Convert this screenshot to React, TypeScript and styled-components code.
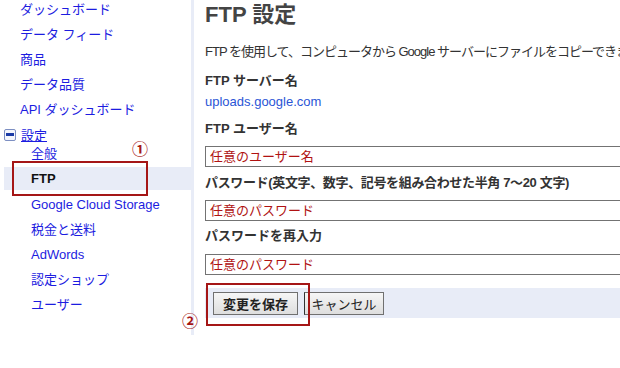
import styled, { createGlobalStyle } from 'styled-components';

const GlobalStyle = createGlobalStyle`
  html, body {
    margin: 0;
    padding: 0;
    background: #fff;
    overflow: hidden;
  }
  body {
    font-family: 'Liberation Sans', 'Noto Sans CJK JP', sans-serif;
    font-size: 13px;
  }
`;

const PAGE_BG = '#e8ecf7';
const MARK_RED = '#a51616';

const Page = styled.div`
  display: flex;
  width: 620px;
  height: 368px;
  overflow: hidden;
  position: relative;
`;

const Sidebar = styled.nav`
  flex: 0 0 191px;
  height: 335px;
  border-right: 3px solid ${PAGE_BG};
`;

const NavList = styled.ul`
  list-style: none;
  margin: -3px 0 0;
  padding: 0;
`;

const NavItem = styled.li<{ $sub?: boolean }>`
  height: 25px;
  line-height: 25px;
  padding-left: ${(p) => (p.$sub ? 31 : 20)}px;
  color: #1c1ce0;
  white-space: nowrap;
`;

const SectionItem = styled.li`
  display: flex;
  align-items: center;
  height: 25px;
  padding-left: 4px;
  gap: 5px;
  color: #1c1ce0;
  text-decoration: underline;
`;

const MinusBox = styled.span`
  display: inline-flex;
  align-items: center;
  justify-content: center;
  box-sizing: border-box;
  width: 12px;
  height: 12px;
  border: 1px solid #7d8fc2;
  border-radius: 2px;
  background: #f4f6fc;
  &::after {
    content: '';
    width: 8px;
    height: 3px;
    background: #1b3ba6;
  }
`;

const FirstSubItem = styled(NavItem)`
  height: 14px;
  line-height: 14px;
`;

const ActiveItem = styled.li`
  margin: 6px 0 2px 4px;
  padding-left: 27px;
  height: 23px;
  line-height: 23px;
  background: ${PAGE_BG};
  font-weight: bold;
  color: #111;
`;

const Marker = styled.span`
  position: absolute;
  color: ${MARK_RED};
  font-size: 16px;
  line-height: 16px;
  font-weight: bold;
  font-family: 'Noto Sans CJK JP', sans-serif;
`;

const HighlightFrame = styled.div<{ $x: number; $y: number; $w: number; $h: number }>`
  position: absolute;
  left: ${(p) => p.$x}px;
  top: ${(p) => p.$y}px;
  width: ${(p) => p.$w}px;
  height: ${(p) => p.$h}px;
  border: 2px solid ${MARK_RED};
  box-sizing: border-box;
  pointer-events: none;
`;

const Main = styled.main`
  flex: 1;
  padding-left: 11px;
  overflow: hidden;
`;

const Title = styled.h1`
  margin: 0;
  font-size: 22px;
  line-height: 30px;
  font-weight: bold;
  color: #444;
`;

const Description = styled.p`
  margin: 13px 0 0;
  line-height: 18px;
  color: #333;
  white-space: nowrap;
  letter-spacing: -1px;
`;

const Label = styled.div<{ $mt: number; $tight?: boolean }>`
  margin-top: ${(p) => p.$mt}px;
  line-height: 18px;
  font-weight: bold;
  color: #333;
  white-space: nowrap;
  letter-spacing: ${(p) => (p.$tight ? '-0.35px' : '0')};
`;

const ServerLink = styled.a`
  display: block;
  margin-top: 3px;
  line-height: 18px;
  color: #2a55d6;
  text-decoration: none;
`;

const TextField = styled.div<{ $mt: number }>`
  margin-top: ${(p) => p.$mt}px;
  width: 500px;
  height: 19px;
  line-height: 19px;
  border: 1px solid #737373;
  padding-left: 4px;
  color: #b01212;
  white-space: nowrap;
`;

const ButtonBar = styled.div`
  margin-top: 13px;
  height: 30px;
  background: ${PAGE_BG};
  display: flex;
  align-items: center;
  gap: 6px;
  padding-left: 8px;
`;

const Button = styled.button<{ $primary?: boolean }>`
  height: 23px;
  width: ${(p) => (p.$primary ? 85 : 80)}px;
  padding: 0;
  border: 1px solid #707070;
  border-left-color: ${(p) => (p.$primary ? '#707070' : '#333')};
  background: linear-gradient(#f6f6f6, #dedede);
  font-family: 'Liberation Sans', 'Noto Sans CJK JP', sans-serif;
  font-size: 13px;
  font-weight: ${(p) => (p.$primary ? 'bold' : 'normal')};
  color: #222;
`;

export default function App() {
  return (
    <>
      <GlobalStyle />
      <Page>
        <Sidebar>
          <NavList>
            <NavItem>ダッシュボード</NavItem>
            <NavItem>データ フィード</NavItem>
            <NavItem>商品</NavItem>
            <NavItem>データ品質</NavItem>
            <NavItem>API ダッシュボード</NavItem>
            <SectionItem>
              <MinusBox />
              設定
            </SectionItem>
            <FirstSubItem $sub>全般</FirstSubItem>
            <ActiveItem>FTP</ActiveItem>
            <NavItem $sub>Google Cloud Storage</NavItem>
            <NavItem $sub>税金と送料</NavItem>
            <NavItem $sub>AdWords</NavItem>
            <NavItem $sub>認定ショップ</NavItem>
            <NavItem $sub>ユーザー</NavItem>
          </NavList>
        </Sidebar>
        <Main>
          <Title>FTP 設定</Title>
          <Description>
            FTP を使用して、コンピュータから Google サーバーにファイルをコピーできます。
          </Description>
          <Label $mt={11}>FTP サーバー名</Label>
          <ServerLink>uploads.google.com</ServerLink>
          <Label $mt={9}>FTP ユーザー名</Label>
          <TextField $mt={8}>任意のユーザー名</TextField>
          <Label $mt={7} $tight>パスワード(英文字、数字、記号を組み合わせた半角 7～20 文字)</Label>
          <TextField $mt={8}>任意のパスワード</TextField>
          <Label $mt={6}>パスワードを再入力</Label>
          <TextField $mt={9}>任意のパスワード</TextField>
          <ButtonBar>
            <Button $primary>変更を保存</Button>
            <Button>キャンセル</Button>
          </ButtonBar>
        </Main>
        <HighlightFrame $x={12} $y={161} $w={136} $h={35} />
        <Marker style={{ left: 132, top: 140 }}>①</Marker>
        <HighlightFrame $x={206} $y={283} $w={104} $h={43} />
        <Marker style={{ left: 182, top: 312 }}>②</Marker>
      </Page>
    </>
  );
}
